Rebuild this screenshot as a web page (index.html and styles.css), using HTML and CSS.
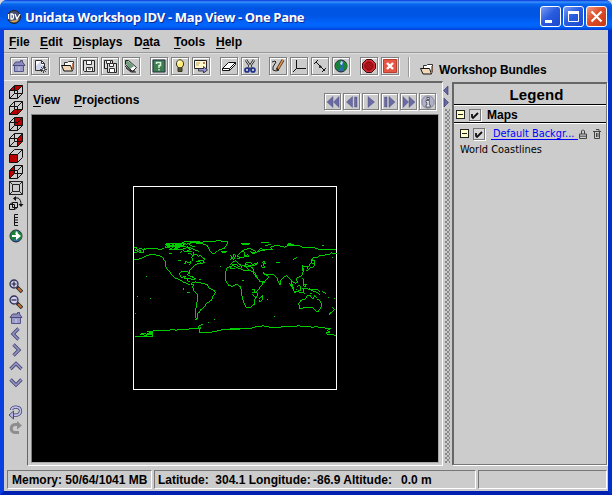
FILE: index.html
```html
<!DOCTYPE html>
<html lang="en">
<head>
<meta charset="utf-8">
<title>Unidata Workshop IDV - Map View - One Pane</title>
<link rel="stylesheet" href="styles.css">
</head>
<body>
<svg class="defs" width="0" height="0">
  <defs>
    <symbol id="wire" viewBox="0 0 14 14"><path d="M.5 5.500h8v8h-8zM5.500.5h8v8h-8zM.5 5.500l5-5M8.500 5.500l5-5M8.500 13.500l5-5M.5 13.500l5-5" fill="none" stroke="#111"/></symbol>
    <symbol id="home" viewBox="0 0 14 14"><path d="M2.500 6.500h9v6h-9z" fill="#9c9cc8" stroke="#55558a"/><path d="M1 6.500l2.500-3.500h5V1.500h2V3l2.500 3.500z" fill="#8c8cbc" stroke="#4c4c80"/><path d="M6 8h2v4H6z" fill="#b4b4da"/></symbol>
    <symbol id="folder" viewBox="0 0 14 14"><path d="M3.500 10.500v-7h3l1-1h5v8" fill="#fff" stroke="#333"/><path d="M11 4h1.500v6H11z" fill="#c47858"/><path d="M.5 6.500h9l2 5.500H3z" fill="#f0d8b8" stroke="#111"/></symbol>
    <symbol id="lens" viewBox="0 0 14 14"><path d="M8 8l5 5" stroke="#222" stroke-width="3.500"/><path d="M9 9l3.500 3.500" stroke="#bd6d35" stroke-width="2"/><circle cx="5" cy="5" r="4" fill="#cfcff4" stroke="#333358" stroke-width="1.300"/></symbol>
    <symbol id="globe" viewBox="0 0 14 14"><circle cx="7" cy="7" r="6" fill="#2b6cae" stroke="#222"/><path d="M2 4l4-3 2 1-2 3 1 3-3 4-3-4zM9 2l4 3v4l-3 3-1-4z" fill="#178336"/><path d="M7 2l2 1-1 3-2-1z" fill="#b6d8ec"/></symbol>
  </defs>
</svg>
<div class="window">
  <header class="titlebar">
    <svg class="logo" width="16" height="16" viewBox="0 0 16 16"><circle cx="8" cy="8" r="6.500" fill="#485070" stroke="#222"/><path d="M4 12c3 2 7 2 9-2l-2 1z" fill="#e2a848"/><path d="M2.500 5v5M5 5v5h1c2 0 2-5 0-5zM9 5l2 5 3-5" fill="none" stroke="#fff" stroke-width="1.300"/></svg>
    <h1>Unidata Workshop IDV - Map View - One Pane</h1>
    <div class="controls">
      <span class="control"><svg width="19" height="19"><path d="M4 13h7v3H4z" fill="#fff"/></svg></span>
      <span class="control"><svg width="19" height="19"><path d="M4.500 5h10v9.500h-10z" fill="none" stroke="#fff"/><path d="M4 4h11v3H4z" fill="#fff"/></svg></span>
      <span class="control close"><svg width="19" height="19"><path d="M4.500 4.500l10 10M14.500 4.500l-10 10" stroke="#fff" stroke-width="2.200"/></svg></span>
    </div>
  </header>

  <nav class="menubar">
    <span class="m-file"><u>F</u>ile</span><span class="m-edit"><u>E</u>dit</span><span class="m-displays"><u>D</u>isplays</span><span class="m-data">D<u>a</u>ta</span><span class="m-tools"><u>T</u>ools</span><span class="m-help"><u>H</u>elp</span>
  </nav>

  <div class="toolbar">
    <div class="group">
      <button><svg viewBox="0 0 14 14"><use href="#home"/></svg></button>
      <button><svg viewBox="0 0 14 14"><path d="M2.500 1.500h6l3 3v7h-9z" fill="#fff" stroke="#333"/><path d="M3 7l5-5v4h3v5H3z" fill="#cdd4ec"/><path d="M8.500 1.500v3h3" fill="none" stroke="#333"/><path d="M10.500 7v7M7 10.500h7M8 8l5 5M13 8l-5 5" stroke="#222" stroke-width=".8"/><circle cx="10.500" cy="10.500" r="1" fill="#fff"/></svg></button>
    </div>
    <div class="group">
      <button><svg viewBox="0 0 14 14"><use href="#folder"/></svg></button>
      <button><svg viewBox="0 0 14 14"><path d="M1.500 1.500h11v11h-10l-1-1z" fill="#ddd" stroke="#222"/><path d="M4.500 1.500h5v4h-5zM4.500 8.500h6v4h-6z" fill="#fff" stroke="#333"/><path d="M6 10h3" stroke="#333"/></svg></button>
      <button><svg viewBox="0 0 14 14"><path d="M1.500 1.500h8v8h-8z" fill="#ddd" stroke="#222"/><path d="M3.500 1.500h4v3h-4z" fill="#fff" stroke="#333"/><path d="M4.500 4.500h9v9h-9z" fill="#ddd" stroke="#222"/><path d="M6.500 4.500h4v3h-4zM6.500 9.500h5v4h-5z" fill="#fff" stroke="#333"/></svg></button>
      <button><svg viewBox="0 0 14 14"><path d="M1.500 1.500h3l8 7-4 4-7-7z" fill="#fff" stroke="#222"/><path d="M2 2h2l6 5-4 3-4-5z" fill="#6d9c7c"/><path d="M1 7l6 5h4M2 9l5 4h5" fill="none" stroke="#222"/></svg></button>
    </div>
    <div class="group">
      <button><svg viewBox="0 0 14 14"><path d="M1 1h12v12H1z" fill="#3e7d50" stroke="#234"/><path d="M4.500 5V3.500h4v3H7V9M7 10v1.500" fill="none" stroke="#d8efd9" stroke-width="1.500"/></svg></button>
      <button><svg viewBox="0 0 14 14"><path d="M3.500 6c-1-7 8-7 7 0L9 8.500v4H5v-4z" fill="#ffed7a" stroke="#3c3416"/><path d="M5 9h4M5 11h4" stroke="#222" stroke-width="1.300"/><path d="M5 4l2-2" stroke="#fff" stroke-width="1.500"/></svg></button>
      <button><svg viewBox="0 0 14 14"><path d="M.5 1.500h12v8H.5z" fill="#fff7ce" stroke="#222"/><path d="M2 4h4M2 6h3" stroke="#b8a96a"/><path d="M9 3h2v2H9z" fill="#c77748"/><path d="M4.500 9.500h5v-2l4 3.500-4 3v-2h-5z" fill="#9292d4" stroke="#222" stroke-width=".8"/></svg></button>
    </div>
    <div class="group">
      <button><svg viewBox="0 0 14 14"><path d="M.5 9.500l6-6h7v2l-6 6h-7z" fill="#fff" stroke="#111"/><path d="M.5 9.500h7l6-6M7.500 9.500v2" fill="none" stroke="#111"/></svg></button>
      <button><svg viewBox="0 0 14 14"><path d="M3 1l6 9M11 1L5 10" stroke="#222" stroke-width="2.400"/><path d="M3 1l6 9M11 1L5 10" stroke="#e6e6e6"/><circle cx="4" cy="11" r="2" fill="none" stroke="#1e2e8c" stroke-width="1.700"/><circle cx="10" cy="11" r="2" fill="none" stroke="#1e2e8c" stroke-width="1.700"/></svg></button>
    </div>
    <div class="group">
      <button><svg viewBox="0 0 14 14"><path d="M1 3l3-1 1 1-3 5v3l3 1 3-1" fill="none" stroke="#222"/><path d="M12 1L6 11" stroke="#40240e" stroke-width="3"/><path d="M12 1L7 9.500" stroke="#db9451" stroke-width="1.500"/></svg></button>
      <button><svg viewBox="0 0 14 14"><path d="M4.500 1v8.500H14M4.500 9.500L1 13" fill="none" stroke="#111"/></svg></button>
      <button><svg viewBox="0 0 14 14"><path d="M3 3l9 9M1 5l4-4M9 13l4-4M7 6v3M9 8H6" fill="none" stroke="#111"/></svg></button>
      <button><svg viewBox="0 0 14 14"><use href="#globe"/></svg></button>
    </div>
    <div class="group">
      <button><svg viewBox="0 0 14 14"><path d="M4.500.5h5l4 4v5l-4 4h-5l-4-4v-5z" fill="#cf2c32" stroke="#41080c"/><path d="M5.500 3h3L11 5.500v3L8.500 11h-3L3 8.500v-3z" fill="#a81118" stroke="#85060c"/></svg></button>
      <button><svg viewBox="0 0 14 14"><path d="M.5.5h13v13H.5z" fill="#e65645" stroke="#bc3c30"/><path d="M4 4l6 6M10 4l-6 6" stroke="#fff" stroke-width="2.400"/></svg></button>
    </div>
    <i class="sep"></i>
    <svg class="bundle" width="14" height="14"><use href="#folder"/></svg>
    <span class="bundle-label">Workshop Bundles</span>
  </div>

  <main class="work">
    <aside class="strip">
      <svg viewBox="0 0 14 14"><path class="face" d="M1 5l4-4h8L9 5z"/><use href="#wire"/></svg>
      <svg viewBox="0 0 14 14"><path class="face" d="M1 13l4-4h8l-4 4z"/><use href="#wire"/></svg>
      <svg viewBox="0 0 14 14"><path class="face" d="M6 1h7v7H6z"/><use href="#wire"/></svg>
      <svg viewBox="0 0 14 14"><path class="face" d="M9 5l4-4v8l-4 4z"/><use href="#wire"/></svg>
      <svg viewBox="0 0 14 14"><path d="M.5 5.500l5-5h8v8l-5 5M8.500 5.500l5-5" fill="none" stroke="#111"/><path class="face" d="M.5 5.500h8v8h-8z" stroke="#111"/></svg>
      <svg viewBox="0 0 14 14"><path class="face" d="M1 5l4-4v8l-4 4z"/><use href="#wire"/></svg>
      <svg viewBox="0 0 14 14"><path d="M.5.5h13v13H.5zM3.500 3.500h7v7h-7zM.5.5l3 3M13.500.5l-3 3M.5 13.500l3-3M13.500 13.500l-3-3" fill="none" stroke="#222"/></svg>
      <svg viewBox="0 0 14 14"><path d="M.5 7.500h5v5h-5zM3.500 5.500h5v5h-5zM.5 7.500l3-2M5.500 12.500l3-2" fill="none" stroke="#111"/><path d="M5 1h4c2 1 3 3 3 7" fill="none" stroke="#111"/><path d="M4 1.500L7-1v5zM9.500 7h5L12 10z" fill="#111"/></svg>
      <svg viewBox="0 0 14 14"><path d="M9 1.500H5.500v11H9M5.500 4.500H9M5.500 7H9M5.500 9.500H9" fill="none" stroke="#111"/></svg>
      <svg viewBox="0 0 14 14"><use href="#globe"/><path d="M3 6h4V3l5 4-5 4V8H3z" fill="#fff"/></svg>
      <i class="gap-lg"></i>
      <svg viewBox="0 0 14 14"><use href="#lens"/><path d="M5 2.500v5M2.500 5h5" stroke="#223" stroke-width="1.200"/></svg>
      <svg viewBox="0 0 14 14"><use href="#lens"/><path d="M2.500 5h5" stroke="#223" stroke-width="1.200"/></svg>
      <svg viewBox="0 0 14 14"><use href="#home"/></svg>
      <svg viewBox="0 0 14 14"><path class="chev-edge" d="M9.500 1.500L4 7l5.500 5.500"/><path class="chev" d="M9.500 1.500L4 7l5.500 5.500"/></svg>
      <svg viewBox="0 0 14 14"><path class="chev-edge" d="M4.500 1.500L10 7l-5.500 5.500"/><path class="chev" d="M4.500 1.500L10 7l-5.500 5.500"/></svg>
      <svg viewBox="0 0 14 14"><path class="chev-edge" d="M1.500 10L7 4.500l5.500 5.500"/><path class="chev" d="M1.500 10L7 4.500l5.500 5.500"/></svg>
      <svg viewBox="0 0 14 14"><path class="chev-edge" d="M1.500 4.500L7 10l5.500-5.500"/><path class="chev" d="M1.500 4.500L7 10l5.500-5.500"/></svg>
      <i class="gap-sm"></i>
      <svg viewBox="0 0 14 14"><path class="turn-edge" d="M2.500 5c0-4 9-4 9 1 0 4-4 4.500-8 4"/><path class="turn" d="M2.500 5c0-4 9-4 9 1 0 4-4 4.500-8 4"/><path d="M0 10l4.500-4v8z" fill="#b4b4e4" stroke="#222244" stroke-width=".7"/></svg>
      <svg viewBox="0 0 14 14"><path d="M10 11.500H6c-5 0-5-8 0-8h3" fill="none" stroke="#8e8e8e" stroke-width="3"/><path d="M8 0l5 4.500-5 4z" fill="#8e8e8e"/></svg>
    </aside>

    <section class="view">
      <div class="viewbar">
        <span class="v-view"><u>V</u>iew</span><span class="v-proj"><u>P</u>rojections</span>
        <div class="player">
          <button><svg viewBox="0 0 14 14"><path d="M7 1.500v11L1 7zM13 1.500v11L7.500 7z"/></svg></button>
          <button><svg viewBox="0 0 14 14"><path d="M7.500 1.500v11L1.500 7zM9.500 2h2.500v10H9.500z"/></svg></button>
          <button><svg viewBox="0 0 14 14"><path d="M4 1.500v11L10.500 7z"/></svg></button>
          <button><svg viewBox="0 0 14 14"><path d="M6 1.500v11L12 7zM1.500 2H4v10H1.500z"/></svg></button>
          <button><svg viewBox="0 0 14 14"><path d="M1 1.500v11L6.500 7zM7 1.500v11L13 7z"/></svg></button>
          <button><svg viewBox="0 0 14 14"><circle cx="7" cy="7" r="6.300" fill="#b0b0c8" stroke="#444460"/><path d="M6 2.500h2.300v2H6zM5 5.500h3.300v4.500h1V12H5v-2h1V7.500H5z" fill="#eee" stroke="#445" stroke-width=".8"/></svg></button>
        </div>
      </div>
      <svg class="canvas" viewBox="32 115 406 347" shape-rendering="crispEdges">
        <rect x="133.500" y="186.500" width="203" height="203" fill="none" stroke="#fff"/>
        <g class="coast" transform="translate(130 230) scale(.33333)">
          <path d="M12 89l22-3 10-7 14-4 20 0 12 3 8 5 7 10 1 13 5 10 8 10 7 10 8 7 9 4 8 3 10 8 8 1 7 6 4-1"/>
          <path d="M181 158l-5-4-5-3 2-7-9 2 2-7-9 3-6-2-2-9 5-6 10-2 9 2 5 8 0-10 7-7 5-7 6-5 13-4 2-4-7 0 5-4 12 0 4-4-7-5-6-7-7 3-5-5-10 1-5 6 4 9-4 1"/>
          <path d="M12 54l8-2-4 9 10-2-5 5 12-2-4 6 12-2M12 67h8M38 70l6-15M28 54l12 4 28-3 22 3 12-2"/>
          <path d="M104 52l8-7 10 4-5-8 15-2 8 6 9-5 10 2 9-3-10 7 8 4-13-1-10 5-12-4-8 5-11-4zM105 45l19-5 10 7-22 6 29-8 13-3 7 7-20 4 6-9 13 4-24 8M109 42h60M112 50h55M120 46h40"/>
          <path d="M156 37l20-4 33 2-22 3-19 5M116 58h30M131 54l22 5 18-6 11 5-11 5 16 2 7 8-6 7-5-9-9-2M118 72l9 0M145 91h8M170 50l16 5 10 6 10 3M176 42l12 8 8 0M150 70l8-8 18 4"/>
          <path d="M161 98l7 4 0-8 8 4 8-3-6 10"/>
          <path d="M181 37l26 2 12-3 30-2 18-2 26 4-3 8-6 10-14 5-7 3-10 10-9-4-8-13-5-9-13-4-10-2zM274 65l16-2-2 4-13 1M198 97l9-6 11 2 7 5-20 3"/>
          <path d="M166 146l14 0 9 4 7-1M171 134l9 4 9 3M187 141l10 5M208 148l4 0"/>
          <path d="M182 165l5-7 9-2 14 1 8 4 13 2 6 11 17 8 2 6-7 10-4 12-8 7-9 4-4 8-7 8-5 1-3 8-5 4-2 7 0 10-5-3-2-9 2-15 3-13 2-21 0-13-9-9-6-13 4-8z"/>
          <path d="M47 139h3l2 3M20 199h3M60 205h3M160 174v5M172 187h8M195 268h7M236 275v4M253 268h3M15 250h3M269 111h3"/>
          <path d="M14 319h54v-12l-12 0 10 4-14 0 13 4-30-5-4 4 20 2M50 305l18-2 48-1 8-4 16 3 10-4 16 1 24-2 10-1 6 2-2-6 6-5 10-4M196 296l16 0 0-6-5 14 5 3-5 1 28 0 22-4 20-5 53-2"/>
        </g>
        <g class="coast" transform="translate(230 230) scale(.33333)">
          <path d="M0 110L-8 112-14 130-13 152-5 165 6 170 12 167 20 163 32 171 34 185 37 205 42 220 48 232 62 232 74 222 75 208 83 196 80 184 92 170 102 155 90 156 82 142 72 125 60 122 45 123 35 118 20 112 10 106 0 110"/>
          <path d="M89 206L97 196 98 208 91 217 87 210M66 180L73 178 76 188 67 186M67 192L72 199 80 203M36 152h6M110 210h4"/>
          <path d="M66 122L76 138 90 153 99 157 111 148 117 140 108 135 98 126 104 134 118 134 130 134 139 140 146 158 150 165 151 152 162 141 170 137 178 143 184 153 183 165 190 178"/>
          <path d="M0 106L6 98 16 92 26 101 34 106 28 110 20 104 10 102 0 116 14 116M30 118L38 105 46 108 60 122M40 112L47 105 48 98 60 98 69 103 84 98 78 104 66 108 50 104 42 108 68 112 70 122"/>
          <path d="M0 90L8 84 12 72 18 77 10 90 4 80 0 76M20 88L28 84 40 82 47 76 54 74 58 79 46 80 42 66 38 60 30 70 22 78 30 84 20 88M36 66L46 58 60 55 70 60 80 68 66 68 60 64 70 72 84 64 105 60"/>
          <path d="M95 97L104 94 106 102 98 101 105 111 96 112 95 104M138 97h12M190 88L200 83M98 160L106 155"/>
          <path d="M82 64L92 54 100 60 112 58 128 60 120 52 134 47 150 48 164 52 176 45 200 48 206 45 216 52 234 53 256 54 268 58 318 58"/>
          <path d="M33 42h26M36 45h20M92 39h24M106 48L122 42M170 42L190 46 174 40 188 43 196 49M275 48h8"/>
          <path d="M320 70L304 69 300 73 290 72 284 77 270 75 264 82 250 82 246 90 255 92 254 103 246 100 243 96 247 84M244 96L238 107 232 111 218 110 220 118 218 132 212 140 200 143 198 150 203 156 196 160 189 155 183 154"/>
          <path d="M232 112L235 121 228 120M236 116L248 111 254 105 252 96M219 106L219 122M306 84h4"/>
          <path d="M216 145L222 150 222 164 229 163 225 170 218 164M177 158L188 175 195 188 204 184M187 162L190 176M194 183L210 187 226 190M200 172L208 165 213 170 212 182 203 181 198 176M215 176L223 174 219 185M226 175L240 178 252 184 264 188 270 194M238 176L250 180 264 180 270 187M276 185L288 191M296 201v4M240 192L246 190"/>
          <path d="M206 222L213 211 225 207 232 198 240 196 244 203 249 208 254 195 260 205 270 213 275 224 272 236 262 247 255 239 246 233 232 231 220 234 209 236 210 228zM260 244h5"/>
          <path d="M305 232L314 239 308 243 298 255 304 248 298 250M314 203v4M131 259h3"/>
          <path d="M0 295h62L76 291 90 289 100 287 108 290 126 292 148 292 160 289 178 290 202 288 207 286 214 290 234 288 246 292 260 290 274 293 284 293 290 296 302 296 291 301 300 306 288 308 293 314 304 312 318 317"/>
        </g>
      </svg>
    </section>

    <div class="splitter">
      <svg width="7" height="23"><path d="M5 1v9L.5 5.500zM1 13v9l4.500-4.500z" fill="#6666a0" stroke="#333366" stroke-width=".6"/></svg>
      <i class="dots"></i>
    </div>

    <aside class="legend">
      <h2>Legend</h2>
      <div class="legend-group">
        <i class="minus"></i><i class="check"><svg width="10" height="10"><path d="M2 4v3l1 1 5-5" fill="none" stroke="#111" stroke-width="1.800"/></svg></i><b>Maps</b>
      </div>
      <div class="legend-item">
        <i class="minus"></i><i class="check"><svg width="10" height="10"><path d="M2 4v3l1 1 5-5" fill="none" stroke="#111" stroke-width="1.800"/></svg></i><a>Default Backgr...</a>
        <svg class="lock" width="8" height="10"><path d="M2.500 5V2l1-1h1l1 1v3M.5 5h7v4.500h-7zM1 7.200h6" fill="none" stroke="#444"/></svg>
        <svg class="trash" width="9" height="10"><path d="M0 2.500h8M3 .5h3v2M1.500 3v6.500h5V3M3.500 4v4M5 4v4" fill="none" stroke="#444"/></svg>
      </div>
      <p>World Coastlines</p>
    </aside>
  </main>

  <footer class="status">
    <div class="memory">Memory: 50/64/1041 MB</div>
    <div class="position"><span class="lat">Latitude:  304.1 Longitude:</span><span class="alt">-86.9 Altitude:</span><span>0.0 m</span></div>
    <div class="message"></div>
  </footer>
</div>
</body>
</html>
```

FILE: styles.css
```css
* { box-sizing: border-box; }
body {
  margin: 0;
  width: 612px;
  height: 495px;
  overflow: hidden;
  background: #d8d8d8;
  font: bold 12px/14px "Liberation Sans", sans-serif;
  color: #000;
}
.defs { display: block; height: 0; }
.window {
  height: 495px;
  display: flex;
  flex-direction: column;
  background: #ccc;
  border: solid;
  border-width: 0 4px 4px;
  border-color: #0831d9 #0030c8 #0020b0 #0a3fe0;
  border-radius: 7px 7px 0 0;
}
.titlebar {
  height: 30px;
  margin: 0 -4px;
  flex: none;
  display: flex;
  align-items: center;
  padding: 3px 5px 0 6px;
  border-radius: 7px 7px 0 0;
  background: linear-gradient(#0831d9 0, #3a93ff 2px, #0867ee 4px, #0054e3 8px, #0055e5 16px, #0066ff 24px, #0061f5 27px, #003dd7 30px);
}
.logo { margin-right: 3px; }
h1 {
  margin: 0;
  font: bold 13px/18px "Open Sans", sans-serif;
  letter-spacing: -.35px;
  white-space: nowrap;
  color: #fff;
  text-shadow: 1px 1px #0a2a92;
}
.controls { display: flex; gap: 2px; margin-left: auto; }
.control {
  width: 21px;
  height: 21px;
  border: 1px solid #fff;
  border-radius: 3px;
  background: linear-gradient(135deg, #7b9cf2, #2a5de0 45%, #1a48cc);
}
.control svg { display: block; }
.close { background: linear-gradient(135deg, #f09a80, #dd4c28 45%, #c43a14); }
.menubar {
  height: 23px;
  flex: none;
  display: flex;
  padding-top: 5px;
  border-bottom: 1px solid #999;
}
.menubar span, .viewbar span { white-space: nowrap; }
u { text-underline-offset: 2px; text-decoration-thickness: 1px; }
.m-file { margin-left: 5px; width: 31px; }
.m-edit { width: 33px; }
.m-displays { width: 61px; }
.m-data { width: 40px; }
.m-tools { width: 42px; }
.toolbar {
  height: 27px;
  flex: none;
  display: flex;
  padding: 3px 0 0 6px;
  border-top: 1px solid #ddd;
}
.group { display: flex; gap: 3px; margin-right: 10px; }
button {
  width: 18px;
  height: 18px;
  padding: 1px;
  border: 1px solid #808080;
  background: #ccc;
  box-shadow: inset 1px 1px #fff, 1px 1px #fff;
}
button svg { display: block; width: 14px; height: 14px; }
.sep { width: 2px; height: 20px; margin-left: -1px; background: #999; border-right: 1px solid #fff; }
.bundle { margin: 5px 5px 0 10px; }
.bundle-label { margin-top: 6px; letter-spacing: -.1px; white-space: nowrap; }
.work { height: 386px; flex: none; display: flex; }
.strip {
  width: 23px;
  border-top: 1px solid #eee;
  padding: 4px 0 0 5px;
  display: flex;
  flex-direction: column;
  gap: 2px;
}
.strip svg { width: 14px; height: 14px; flex: none; overflow: visible; }
.face { fill: #b80000; }
.gap-lg { height: 32px; flex: none; }
.gap-sm { height: 12px; flex: none; }
.chev, .chev-edge, .turn, .turn-edge { fill: none; stroke: #9494cc; stroke-width: 1.6; }
.chev-edge, .turn-edge { stroke: #44446a; stroke-width: 3.2; }
.turn { stroke: #c0c0f0; }
.view {
  width: 416px;
  margin-top: 1px;
  border: 1px solid #666;
  border-top-width: 2px;
  border-right-color: #fff;
  border-bottom-color: #fff;
  padding: 0 3px;
}
.viewbar { height: 31px; display: flex; padding: 10px 0 0 2px; }
.v-view { width: 41px; }
.player { display: flex; gap: 2px; margin: 0 3px 0 auto; }
.player button { width: 17px; height: 17px; padding: 0 0 0 1px; }
.player svg { fill: #6a6aa4; stroke: #484878; stroke-width: .4; }
.canvas {
  display: block;
  width: 408px;
  height: 349px;
  border: 1px solid #808080;
  border-right-color: #aaa;
  border-bottom-color: #aaa;
  background: #000;
}
.coast path { fill: none; stroke: #00cd00; stroke-width: 3; }
.splitter { width: 9px; padding: 5px 0 0 1px; display: flex; flex-direction: column; }
.splitter svg { flex: none; margin-left: -1px; }
.dots {
  width: 5px;
  flex: 1;
  margin: 1px 0 3px 1px;
  background: radial-gradient(circle at 1px 1px, #888 .8px, transparent 1px) 0 0 / 4px 4px, radial-gradient(circle at 1px 1px, #888 .8px, transparent 1px) 2px 2px / 4px 4px;
}
.legend {
  width: 155px;
  margin: 2px 0 1px;
  border: 2px solid #666;
  border-right: 1px solid #777;
  border-bottom: 1px solid #777;
  box-shadow: 1px 1px #fff;
}
h2 {
  margin: 0;
  height: 21px;
  border-bottom: 1px solid #000;
  font: bold 15px/21px "Liberation Sans", sans-serif;
  letter-spacing: .15px;
  text-align: center;
  padding-left: 13px;
}
.legend-group {
  height: 18px;
  display: flex;
  align-items: center;
  padding: 1px 0 0 2px;
  border-top: 1px solid #fff;
  border-bottom: 1px solid #000;
  box-shadow: 0 1px #fff;
}
.minus {
  width: 9px;
  height: 9px;
  flex: none;
  margin-right: 4px;
  border: 1px solid #222;
  background: linear-gradient(#222, #222) center / 5px 1px no-repeat, #ffffc8;
}
.check {
  width: 12px;
  height: 12px;
  flex: none;
  border: 1px solid #777;
  background: #d8d8d8;
  box-shadow: 1px 1px #fff;
}
.check svg { display: block; }
b { margin-left: 6px; }
.legend-item { height: 21px; display: flex; align-items: center; padding: 0 0 0 6px; }
.legend-item a, p { font: 9.8px/12px "DejaVu Sans", sans-serif; }
.legend-item a {
  width: 87px;
  height: 12px;
  margin: 0 1px 0 6px;
  padding-left: 2px;
  border-bottom: 1px solid #00f;
  color: #00f;
  line-height: 11px;
  white-space: nowrap;
}
.lock { margin-right: 6px; }
p { margin: 0 0 0 6px; }
.status { flex: 1; display: flex; gap: 2px; padding: 4px 1px 2px 3px; }
.status div {
  height: 19px;
  border: 1px solid #777;
  border-right-color: #fff;
  border-bottom-color: #fff;
  padding: 2px 0 0 4px;
  white-space: pre;
}
.memory { width: 145px; }
.status .position { width: 322px; display: flex; padding-left: 3px; }
.lat { width: 155px; }
.alt { width: 88px; }
.message { flex: 1; }
```
